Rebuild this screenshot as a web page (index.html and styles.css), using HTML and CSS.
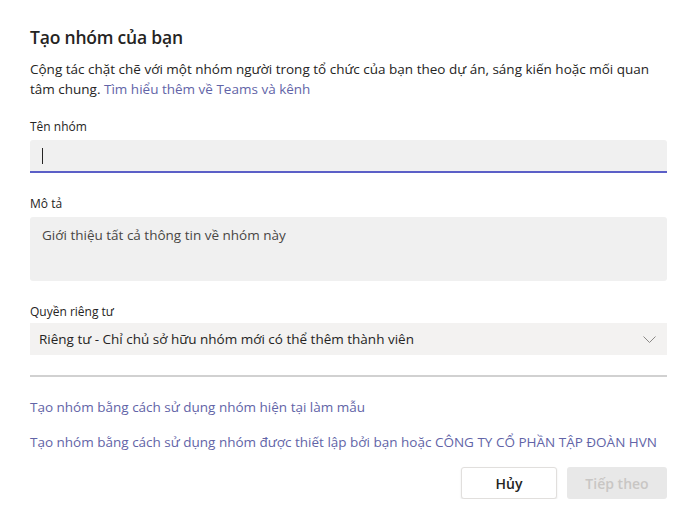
FILE: index.html
```html
<!DOCTYPE html>
<html lang="vi">
<head>
    <meta charset="UTF-8">
    <meta name="viewport" content="width=device-width, initial-scale=1.0">
    <title>Tạo nhóm của bạn</title>
    <link rel="stylesheet" href="styles.css">
</head>
<body>
    <div class="dialog">
        <h1 class="dialog-title">Tạo nhóm của bạn</h1>
        <p class="dialog-desc">
            <span class="desc-line">Cộng tác chặt chẽ với một nhóm người trong tổ chức của bạn theo dự án, sáng kiến hoặc mối quan</span>
            <span>tâm chung.</span>
            <a class="link" href="#">Tìm hiểu thêm về Teams và kênh</a>
        </p>

        <label class="field-label">Tên nhóm</label>
        <div class="text-input focused"><span class="caret"></span></div>

        <label class="field-label">Mô tả</label>
        <div class="text-area">Giới thiệu tất cả thông tin về nhóm này</div>

        <label class="field-label">Quyền riêng tư</label>
        <div class="select">
            <span>Riêng tư - Chỉ chủ sở hữu nhóm mới có thể thêm thành viên</span>
            <svg class="chevron" width="13" height="7" viewBox="0 0 13 7">
                <path d="M0.5 0.5 L6.5 6.5 L12.5 0.5" fill="none" stroke="#8a8886" stroke-width="1"/>
            </svg>
        </div>

        <hr class="divider">

        <a class="link template-link" href="#">Tạo nhóm bằng cách sử dụng nhóm hiện tại làm mẫu</a>
        <a class="link template-link" href="#">Tạo nhóm bằng cách sử dụng nhóm được thiết lập bởi bạn hoặc CÔNG TY CỔ PHẦN TẬP ĐOÀN HVN</a>

        <div class="actions">
            <button class="btn btn-secondary">Hủy</button>
            <button class="btn btn-primary" disabled>Tiếp theo</button>
        </div>
    </div>
</body>
</html>
```

FILE: styles.css
```css
html {
    background-color: #ffffff;
    color: #252423;
    font-family: "Open Sans", "Noto Sans", sans-serif;
}

body {
    margin: 0;
    padding: 0;
}

.dialog {
    display: flex;
    flex-direction: column;
    padding: 24px 30px 0 30px;
}

.dialog-title {
    margin: 0;
    font-size: 17.5px;
    font-weight: 600;
    line-height: 26px;
    letter-spacing: -0.2px;
}

.dialog-desc {
    margin: 9px 0 0 0;
    font-size: 13.5px;
    line-height: 20px;
}

.desc-line {
    display: block;
}

.link {
    color: #6264a7;
    text-decoration: none;
}

.field-label {
    margin-top: 23px;
    font-size: 12px;
    line-height: 16px;
}

.dialog-desc + .field-label {
    margin-top: 20px;
}

.text-input {
    box-sizing: border-box;
    height: 33px;
    margin-top: 5px;
    padding: 8px 12px;
    background-color: #f0f0f0;
    border-radius: 3px 3px 0 0;
    border-bottom: 2px solid #5b5fc7;
}

.caret {
    display: block;
    width: 1px;
    height: 16px;
    background-color: #252423;
}

.text-area {
    box-sizing: border-box;
    height: 64px;
    margin-top: 5px;
    padding: 8px 12px;
    background-color: #f0f0f0;
    border-radius: 3px;
    font-size: 13.5px;
    line-height: 20px;
    color: #484644;
}

.select {
    display: flex;
    align-items: center;
    justify-content: space-between;
    box-sizing: border-box;
    height: 32px;
    margin-top: 3px;
    padding: 0 11px 0 9px;
    background-color: #f3f2f1;
    font-size: 13.5px;
}

.divider {
    margin: 20px 0 0 0;
    border: none;
    border-top: 2px solid #d1d1d1;
}

.template-link {
    font-size: 13.5px;
    line-height: 20px;
}

.divider + .template-link {
    margin-top: 20px;
}

.template-link + .template-link {
    margin-top: 15px;
}

.actions {
    display: flex;
    justify-content: flex-end;
    gap: 10px;
    margin-top: 15px;
}

.btn {
    box-sizing: border-box;
    height: 32px;
    border-radius: 3px;
    font-family: "Open Sans", "Noto Sans", sans-serif;
    font-size: 14px;
    font-weight: 600;
}

.btn-secondary {
    width: 96px;
    background-color: #ffffff;
    border: 1px solid #e1dfdd;
    box-shadow: 0 1px 2px rgba(0, 0, 0, 0.1);
    color: #252423;
}

.btn-primary {
    width: 100px;
    background-color: #e8e8e8;
    border: none;
    color: #c8c6c4;
}
```
